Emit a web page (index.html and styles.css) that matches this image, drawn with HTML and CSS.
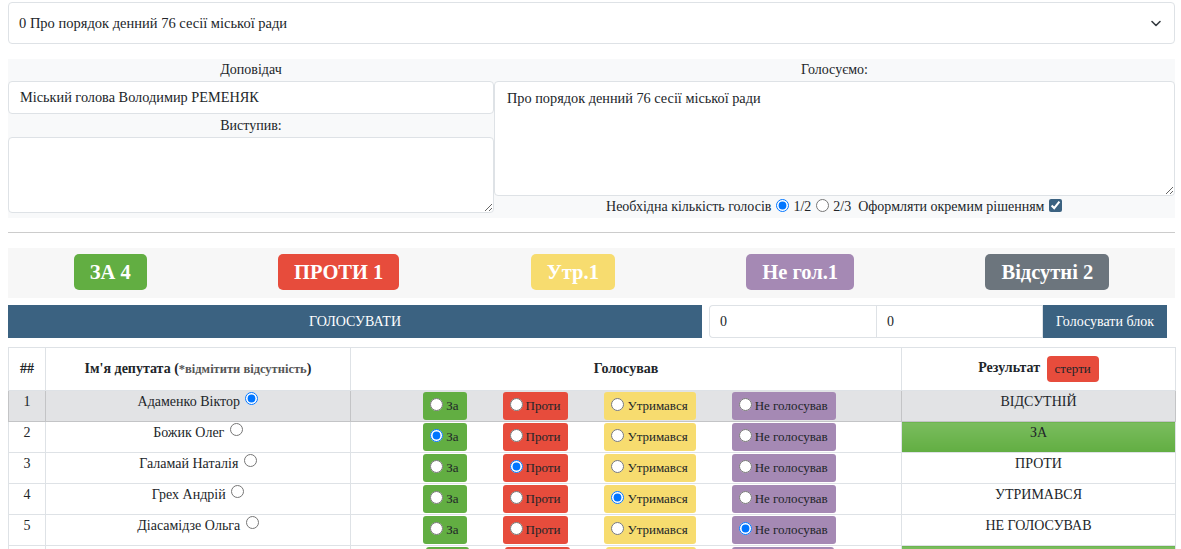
FILE: index.html
```html
<!DOCTYPE html>
<html lang="uk">
<head>
<meta charset="utf-8">
<title>Голосування</title>
<link rel="stylesheet" href="styles.css">
</head>
<body>
<div class="page">
  <div class="select">
    <span>0 Про порядок денний 76 сесії міської ради</span>
    <svg class="chev" width="12" height="12" viewBox="0 0 12 12"><path d="M2 4.5 L6 8.5 L10 4.5" fill="none" stroke="#343a40" stroke-width="1.6" stroke-linecap="round" stroke-linejoin="round"/></svg>
  </div>

  <div class="form">
    <div class="col">
      <div class="label">Доповідач</div>
      <div class="input">Міський голова Володимир РЕМЕНЯК</div>
      <div class="label label2">Виступив:</div>
      <textarea class="ta ta-left"></textarea>
    </div>
    <div class="col">
      <div class="label">Голосуємо:</div>
      <textarea class="ta ta-right">Про порядок денний 76 сесії міської ради</textarea>
      <div class="options">
        Необхідна кількість голосів <input type="radio" name="q" checked> 1/2 <input type="radio" name="q"> 2/3 &nbsp;Оформляти окремим рішенням <input type="checkbox" class="chk" checked>
      </div>
    </div>
  </div>

  <hr class="sep">

  <div class="badges">
    <span class="badge b-green">ЗА 4</span>
    <span class="badge b-red">ПРОТИ 1</span>
    <span class="badge b-yellow">Утр.1</span>
    <span class="badge b-purple">Не гол.1</span>
    <span class="badge b-gray">Відсутні 2</span>
  </div>

  <div class="votebar">
    <div class="btn-vote">ГОЛОСУВАТИ</div>
    <div class="group">
      <div class="field first">0</div>
      <div class="field">0</div>
      <div class="btn-block">Голосувати блок</div>
    </div>
  </div>

  <table class="tbl">
    <colgroup>
      <col class="c1"><col class="c2"><col class="c3"><col class="c4">
    </colgroup>
    <thead>
      <tr>
        <th>##</th>
        <th>Ім'я депутата (<span class="hint">*відмітити відсутність</span>)</th>
        <th>Голосував</th>
        <th>Результат <span class="erase">стерти</span></th>
      </tr>
    </thead>
    <tbody>
      <tr class="secondary">
        <td>1</td>
        <td>Адаменко Віктор <input type="radio" checked></td>
        <td><div class="opts"><label class="o o-green"><input type="radio" name="r1">За</label><label class="o o-red"><input type="radio" name="r1">Проти</label><label class="o o-yellow"><input type="radio" name="r1">Утримався</label><label class="o o-purple"><input type="radio" name="r1">Не голосував</label></div></td>
        <td>ВІДСУТНІЙ</td>
      </tr>
      <tr>
        <td>2</td>
        <td>Божик Олег <input type="radio"></td>
        <td><div class="opts"><label class="o o-green"><input type="radio" name="r2" checked>За</label><label class="o o-red"><input type="radio" name="r2">Проти</label><label class="o o-yellow"><input type="radio" name="r2">Утримався</label><label class="o o-purple"><input type="radio" name="r2">Не голосував</label></div></td>
        <td class="res-za">ЗА</td>
      </tr>
      <tr>
        <td>3</td>
        <td>Галамай Наталія <input type="radio"></td>
        <td><div class="opts"><label class="o o-green"><input type="radio" name="r3">За</label><label class="o o-red"><input type="radio" name="r3" checked>Проти</label><label class="o o-yellow"><input type="radio" name="r3">Утримався</label><label class="o o-purple"><input type="radio" name="r3">Не голосував</label></div></td>
        <td>ПРОТИ</td>
      </tr>
      <tr>
        <td>4</td>
        <td>Грех Андрій <input type="radio"></td>
        <td><div class="opts"><label class="o o-green"><input type="radio" name="r4">За</label><label class="o o-red"><input type="radio" name="r4">Проти</label><label class="o o-yellow"><input type="radio" name="r4" checked>Утримався</label><label class="o o-purple"><input type="radio" name="r4">Не голосував</label></div></td>
        <td>УТРИМАВСЯ</td>
      </tr>
      <tr>
        <td>5</td>
        <td>Діасамідзе Ольга <input type="radio"></td>
        <td><div class="opts"><label class="o o-green"><input type="radio" name="r5">За</label><label class="o o-red"><input type="radio" name="r5">Проти</label><label class="o o-yellow"><input type="radio" name="r5">Утримався</label><label class="o o-purple"><input type="radio" name="r5" checked>Не голосував</label></div></td>
        <td>НЕ ГОЛОСУВАВ</td>
      </tr>
      <tr class="next">
        <td></td>
        <td></td>
        <td><div class="opts"><span class="o o-green w-za"></span><span class="o o-red w-proty"></span><span class="o o-yellow w-utr"></span><span class="o o-purple w-ne"></span></div></td>
        <td class="res-za"></td>
      </tr>
    </tbody>
  </table>
</div>
</body>
</html>
```

FILE: styles.css
```css
html, body {
  margin: 0;
  overflow: hidden;
}
body {
  font-family: "Liberation Serif", "Times New Roman", serif;
  font-size: 14px;
  color: #212529;
  background: #fff;
}
.page {
  padding: 2px 6px 0 8px;
}
.select {
  box-sizing: border-box;
  height: 42px;
  border: 1px solid #dee2e6;
  border-radius: 4px;
  display: flex;
  align-items: center;
  justify-content: space-between;
  padding: 0 12px 0 10px;
  background: #fff;
  font-size: 14.5px;
}
.chev { display: block; }

.form {
  margin-top: 15px;
  background: #f8f9fa;
  display: grid;
  grid-template-columns: 486px 1fr;
}
.col {
  display: flex;
  flex-direction: column;
}
.label {
  height: 22px;
  line-height: 22px;
  text-align: center;
}
.label2 {
  height: 23px;
  line-height: 23px;
}
.input {
  box-sizing: border-box;
  height: 33px;
  line-height: 31px;
  border: 1px solid #dee2e6;
  border-radius: 4px;
  background: #fff;
  padding: 0 11px;
  font-size: 14.3px;
}
.ta {
  box-sizing: border-box;
  display: block;
  width: 100%;
  margin: 0;
  border: 1px solid #dee2e6;
  border-radius: 4px;
  background: #fff;
  font-family: "Liberation Serif", "Times New Roman", serif;
  font-size: 14.3px;
  color: #212529;
  padding: 8px 12px;
  resize: vertical;
}
.ta-left { height: 76px; }
.ta-right { height: 115px; }
.options {
  height: 22px;
  line-height: 22px;
  text-align: center;
}
.options input { margin: 0 1px; vertical-align: -1px; }
.chk { accent-color: #3b6281; }

.sep {
  margin: 14px 0 15px;
  border: 0;
  border-top: 1px solid #ccc;
}

.badges {
  background: #f7f7f7;
  height: 50px;
  box-sizing: border-box;
  padding-top: 6px;
  display: flex;
  justify-content: space-around;
  align-items: flex-start;
}
.badge {
  height: 36px;
  line-height: 36px;
  padding: 0 16px;
  border-radius: 5px;
  color: #fff;
  font-weight: bold;
  font-size: 20.5px;
}
.b-green { background: #62ae42; }
.b-red { background: #e74c3c; }
.b-yellow { background: #f7dc6f; }
.b-purple { background: #a589b4; }
.b-gray { background: #6c757d; }

.votebar {
  margin-top: 7px;
  display: flex;
  height: 33px;
  gap: 7px;
}
.btn-vote {
  width: 694px;
  background: #3b6281;
  color: #fff;
  text-align: center;
  line-height: 33px;
}
.group {
  display: flex;
  width: 458px;
}
.field {
  box-sizing: border-box;
  width: 167px;
  height: 33px;
  line-height: 31px;
  border: 1px solid #dee2e6;
  background: #fff;
  padding: 0 10px;
}
.field.first {
  border-radius: 4px 0 0 4px;
  border-right: 0;
}
.btn-block {
  width: 124px;
  background: #3b6281;
  color: #fff;
  font-size: 14px;
  text-align: center;
  line-height: 33px;
}

.tbl {
  margin-top: 9px;
  width: 100%;
  border-collapse: collapse;
  table-layout: fixed;
}
.c1 { width: 37px; }
.c2 { width: 305px; }
.c3 { width: 551px; }
.c4 { width: 274px; }
.tbl th, .tbl td {
  border: 1px solid #dee2e6;
  text-align: center;
}
.tbl th {
  height: 42px;
  padding: 0 4px;
  vertical-align: middle;
  font-weight: bold;
}
.hint {
  font-size: 12.5px;
  color: #555;
}
.erase {
  display: inline-block;
  margin-left: 3px;
  padding: 0 8px;
  height: 26px;
  line-height: 26px;
  border-radius: 4px;
  background: #e74c3c;
  font-weight: normal;
  font-size: 13px;
  vertical-align: middle;
}
.tbl td {
  padding: 1px 4px;
  height: 28px;
  line-height: 20px;
  vertical-align: top;
}
.tbl td input[type=radio] { margin: 0 0 0 2px; vertical-align: 1px; }
.secondary td {
  background: #e2e3e5;
  border-color: #c3c4c6;
}
.res-za {
  background: linear-gradient(#7abd5e, #62ae42);
}
.opts {
  display: flex;
  justify-content: center;
  gap: 36px;
  padding-left: 7px;
}
.o {
  display: inline-flex;
  align-items: center;
  height: 28px;
  padding: 0 8px 0 2px;
  border-radius: 3px;
  white-space: nowrap;
  font-size: 13px;
}
.tbl .o input[type=radio] {
  margin: 0 3px 4px 5px;
  vertical-align: 0;
}
.o-green { background: #62ae42; }
.o-red { background: #e74c3c; }
.o-yellow { background: #f7dc6f; }
.o-purple { background: #a589b4; }
.w-za { width: 33px; }
.w-proty { width: 55px; }
.w-utr { width: 80px; }
.w-ne { width: 92px; }
```
